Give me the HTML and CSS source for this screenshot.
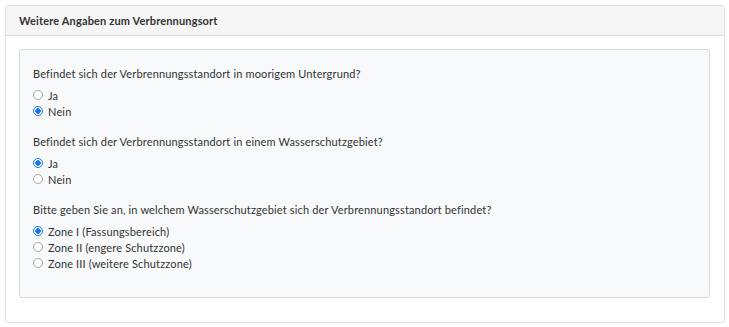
FILE: index.html
```html
<!DOCTYPE html>
<html lang="de">
<head>
    <meta charset="UTF-8">
    <meta name="viewport" content="width=device-width, initial-scale=1.0">
    <title>Weitere Angaben zum Verbrennungsort</title>
    <link rel="stylesheet" href="styles.css">
</head>
<body>
    <!-- Card -->
    <div class="card">
        <div class="card-header">Weitere Angaben zum Verbrennungsort</div>
        <div class="card-body">
            <div class="well">

                <!-- Moorboden -->
                <div class="form-group">
                    <label class="question">Befindet sich der Verbrennungsstandort in moorigem Untergrund?</label>
                    <label class="option"><input type="radio" name="moor" value="ja"> Ja</label>
                    <label class="option"><input type="radio" name="moor" value="nein" checked> Nein</label>
                </div>

                <!-- Wasserschutzgebiet -->
                <div class="form-group">
                    <label class="question">Befindet sich der Verbrennungsstandort in einem Wasserschutzgebiet?</label>
                    <label class="option"><input type="radio" name="wsg" value="ja" checked> Ja</label>
                    <label class="option"><input type="radio" name="wsg" value="nein"> Nein</label>
                </div>

                <!-- Zone -->
                <div class="form-group">
                    <label class="question">Bitte geben Sie an, in welchem Wasserschutzgebiet sich der Verbrennungsstandort befindet?</label>
                    <label class="option"><input type="radio" name="zone" value="1" checked> Zone I (Fassungsbereich)</label>
                    <label class="option"><input type="radio" name="zone" value="2"> Zone II (engere Schutzzone)</label>
                    <label class="option"><input type="radio" name="zone" value="3"> Zone III (weitere Schutzzone)</label>
                </div>

            </div>
        </div>
    </div>
</body>
</html>
```

FILE: styles.css
```css
* {
    margin: 0;
    padding: 0;
    box-sizing: border-box;
}
body {
    font-family: Lato, "Open Sans", sans-serif;
    font-size: 11px;
    letter-spacing: 0.15px;
    color: #333;
    background-color: #fff;
    margin: 5px 4px 5px 5px;
}
.card {
    border: 1px solid #dfdfdf;
    border-radius: 3px;
}
.card-header {
    height: 30px;
    padding: 0 13px;
    line-height: 29px;
    font-weight: bold;
    background-color: #f6f6f6;
    border-bottom: 1px solid #dfdfdf;
}
.card-body {
    padding: 13px 14px 24px 13px;
}
.well {
    background-color: #f8f9fa;
    border: 1px solid #dadada;
    border-radius: 3px;
    padding: 16px 13px 11px 13px;
}
.form-group {
    margin-bottom: 15px;
}
.question {
    display: block;
    line-height: 16px;
    margin-bottom: 5px;
}
.option {
    display: flex;
    align-items: center;
    height: 16px;
}
.option input[type="radio"] {
    appearance: none;
    width: 10px;
    height: 10px;
    margin-right: 5px;
    border: 1px solid #a5a5a5;
    border-radius: 50%;
    background-color: #fff;
}
.option input[type="radio"]:checked {
    border-color: #1a73e8;
    background: radial-gradient(circle, #1a73e8 0, #1a73e8 2.5px, #fff 3px);
}
```
